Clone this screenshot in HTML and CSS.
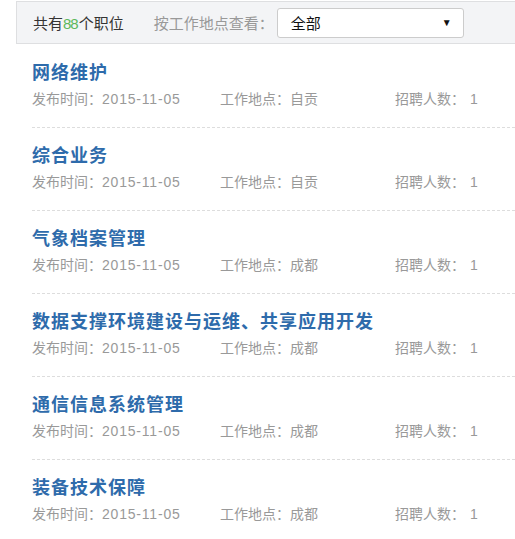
FILE: index.html
```html
<!DOCTYPE html>
<html lang="zh-CN">
<head>
  <meta charset="UTF-8" />
  <title>职位列表</title>
  <link rel="stylesheet" href="styles.css">
</head>
<body>

<div class="jobs">
  <div class="jobs-head">
    <span class="total">共有<em>88</em>个职位</span>
    <span class="filter-label">按工作地点查看：</span>
    <div class="select">
      <span>全部</span>
      <span class="arrow">▼</span>
    </div>
  </div>

  <ul class="job-list">
    <li>
      <a class="job-title" href="#">网络维护</a>
      <div class="job-meta">
        <span>发布时间：<b>2015-11-05</b></span>
        <span>工作地点：自贡</span>
        <span>招聘人数：<b class="count">1</b></span>
      </div>
    </li>
    <li>
      <a class="job-title" href="#">综合业务</a>
      <div class="job-meta">
        <span>发布时间：<b>2015-11-05</b></span>
        <span>工作地点：自贡</span>
        <span>招聘人数：<b class="count">1</b></span>
      </div>
    </li>
    <li>
      <a class="job-title" href="#">气象档案管理</a>
      <div class="job-meta">
        <span>发布时间：<b>2015-11-05</b></span>
        <span>工作地点：成都</span>
        <span>招聘人数：<b class="count">1</b></span>
      </div>
    </li>
    <li>
      <a class="job-title" href="#">数据支撑环境建设与运维、共享应用开发</a>
      <div class="job-meta">
        <span>发布时间：<b>2015-11-05</b></span>
        <span>工作地点：成都</span>
        <span>招聘人数：<b class="count">1</b></span>
      </div>
    </li>
    <li>
      <a class="job-title" href="#">通信信息系统管理</a>
      <div class="job-meta">
        <span>发布时间：<b>2015-11-05</b></span>
        <span>工作地点：成都</span>
        <span>招聘人数：<b class="count">1</b></span>
      </div>
    </li>
    <li>
      <a class="job-title" href="#">装备技术保障</a>
      <div class="job-meta">
        <span>发布时间：<b>2015-11-05</b></span>
        <span>工作地点：成都</span>
        <span>招聘人数：<b class="count">1</b></span>
      </div>
    </li>
  </ul>
</div>

</body>
</html>
```

FILE: styles.css
```css
html, body {
  overflow: hidden;
}
body {
  margin: 0;
  background: #fff;
  font-family: "Liberation Sans", "Noto Sans CJK SC", sans-serif;
  color: #333;
}
.jobs {
  margin: 1px 0 0 16px;
}
.jobs-head {
  display: flex;
  align-items: center;
  height: 41px;
  padding-left: 16px;
  background: #f3f4f6;
  border-top: 1px solid #dedfe1;
  border-bottom: 1px solid #dedfe1;
  border-left: 1px solid #dedfe1;
  font-size: 15px;
}
.total em {
  font-style: normal;
  color: #5cb85c;
  letter-spacing: -1px;
  margin-right: 1px;
}
.filter-label {
  margin-left: 30px;
  color: #999;
}
.select {
  display: flex;
  align-items: center;
  justify-content: space-between;
  box-sizing: border-box;
  width: 187px;
  height: 30px;
  margin-left: 3px;
  padding: 0 11px 0 13px;
  background: #fff;
  border: 1px solid #ccc;
  border-radius: 3px;
  color: #111;
}
.select .arrow {
  font-size: 10px;
  color: #111;
}
.job-list {
  list-style: none;
  margin: 1px 0 0;
  padding: 0;
}
.job-list li {
  margin-left: 16px;
  padding: 17px 0 17px;
  border-bottom: 1px dashed #ddd;
}
.job-title {
  display: block;
  height: 22px;
  line-height: 22px;
  font-size: 18px;
  font-weight: bold;
  letter-spacing: 1px;
  color: #2e6bab;
  text-decoration: none;
}
.job-meta {
  display: grid;
  grid-template-columns: 188px 175px auto;
  margin-top: 4px;
  line-height: 22px;
  font-size: 14px;
  color: #999;
}
.job-meta b {
  font-weight: normal;
  letter-spacing: 0.8px;
}
.job-meta .count {
  margin-left: 5px;
}
```
